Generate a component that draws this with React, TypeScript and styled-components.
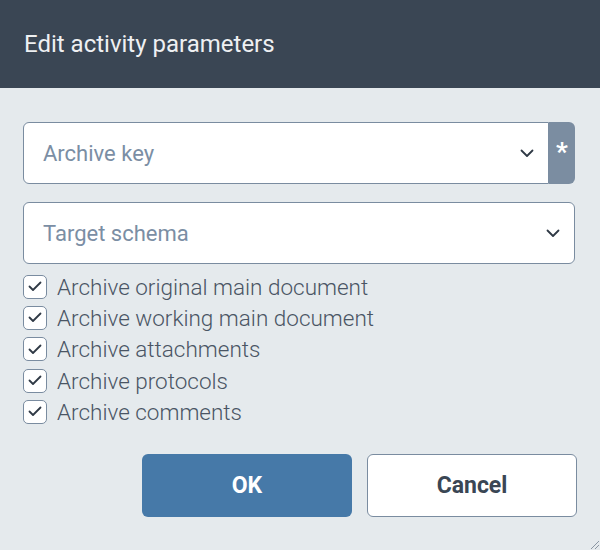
import React from "react";
import styled, { createGlobalStyle } from "styled-components";

const Global = createGlobalStyle`
  html, body { margin: 0; padding: 0; }
  body { font-family: Roboto, "Liberation Sans", Arial, sans-serif; background: #e5eaed; }
`;

const Dialog = styled.div`
  position: relative;
  width: 600px;
  height: 550px;
  background: #e5eaed;
  overflow: hidden;
`;

const Header = styled.div`
  height: 88px;
  background: #3a4654;
  display: flex;
  align-items: center;
  padding: 0 24px;
  box-sizing: border-box;
  color: #eef0f2;
  font-size: 24px;
  font-weight: 400;
`;

const Body = styled.div`
  padding: 34px 25px 0 23px;
  display: flex;
  flex-direction: column;
`;

const FieldRow = styled.div<{ $mb: number }>`
  display: flex;
  height: 62px;
  margin-bottom: ${(p) => p.$mb}px;
`;

const Select = styled.div<{ $required?: boolean }>`
  flex: 1;
  display: flex;
  align-items: center;
  justify-content: space-between;
  background: #fff;
  border: 1px solid #7a8ca0;
  border-radius: ${(p) => (p.$required ? "6px 0 0 6px" : "6px")};
  box-sizing: border-box;
  padding: 0 14px 0 19px;
  color: #7b8ea4;
  font-size: 22px;
`;

const Required = styled.div`
  width: 26px;
  background: #7b8da1;
  border-radius: 0 6px 6px 0;
  color: #fff;
  font-size: 26px;
  font-weight: 700;
  display: flex;
  justify-content: center;
  padding-top: 17px;
  box-sizing: border-box;
  line-height: 1;
`;

const Checks = styled.div`
  display: flex;
  flex-direction: column;
  margin-top: 7px;
`;

const CheckRow = styled.label`
  display: flex;
  align-items: center;
  height: 31.3px;
  gap: 10px;
  color: #4a5564;
  font-size: 22.5px;
  font-weight: 300;
`;

const Box = styled.span`
  width: 24px;
  height: 24px;
  box-sizing: border-box;
  border: 1px solid #7a8ca0;
  border-radius: 5px;
  background: #fff;
  display: flex;
  align-items: center;
  justify-content: center;
`;

const Buttons = styled.div`
  display: flex;
  justify-content: flex-end;
  gap: 15px;
  margin-top: 27px;
  margin-right: -2px;
`;

const Button = styled.button<{ $primary?: boolean }>`
  width: 210px;
  height: 63px;
  border-radius: 6px;
  box-sizing: border-box;
  font-family: Roboto, "Liberation Sans", Arial, sans-serif;
  font-size: 23px;
  font-weight: 700;
  cursor: pointer;
  background: ${(p) => (p.$primary ? "#4679a8" : "#fff")};
  color: ${(p) => (p.$primary ? "#fff" : "#3a4654")};
  border: ${(p) => (p.$primary ? "none" : "1px solid #7a8ca0")};
`;

const Grip = styled.svg`
  position: absolute;
  right: 0;
  bottom: 0;
`;

const Chevron = () => (
  <svg width="14" height="9" viewBox="0 0 14 9" fill="none">
    <path d="M1.5 1.5 L7 7 L12.5 1.5" stroke="#2f3945" strokeWidth="1.8" strokeLinecap="round" strokeLinejoin="round" />
  </svg>
);

const Check = () => (
  <svg width="14" height="11" viewBox="0 0 14 11" fill="none">
    <path d="M1.5 5.5 L5 9 L12.5 1.5" stroke="#2f3945" strokeWidth="1.8" strokeLinecap="round" strokeLinejoin="round" />
  </svg>
);

const items = [
  "Archive original main document",
  "Archive working main document",
  "Archive attachments",
  "Archive protocols",
  "Archive comments",
];

export default function App() {
  return (
    <>
      <Global />
      <Dialog>
        <Header>Edit activity parameters</Header>
        <Body>
          <FieldRow $mb={18}>
            <Select $required>
              <span>Archive key</span>
              <Chevron />
            </Select>
            <Required>*</Required>
          </FieldRow>
          <FieldRow $mb={0}>
            <Select>
              <span>Target schema</span>
              <Chevron />
            </Select>
          </FieldRow>
          <Checks>
            {items.map((t) => (
              <CheckRow key={t}>
                <Box>
                  <Check />
                </Box>
                {t}
              </CheckRow>
            ))}
          </Checks>
          <Buttons>
            <Button $primary>OK</Button>
            <Button>Cancel</Button>
          </Buttons>
        </Body>
        <Grip width="12" height="12" viewBox="0 0 12 12">
          <path d="M11 3 L3 11 M11 7 L7 11 M11 11 L11 11" stroke="#8a96a3" strokeWidth="1" />
        </Grip>
      </Dialog>
    </>
  );
}
